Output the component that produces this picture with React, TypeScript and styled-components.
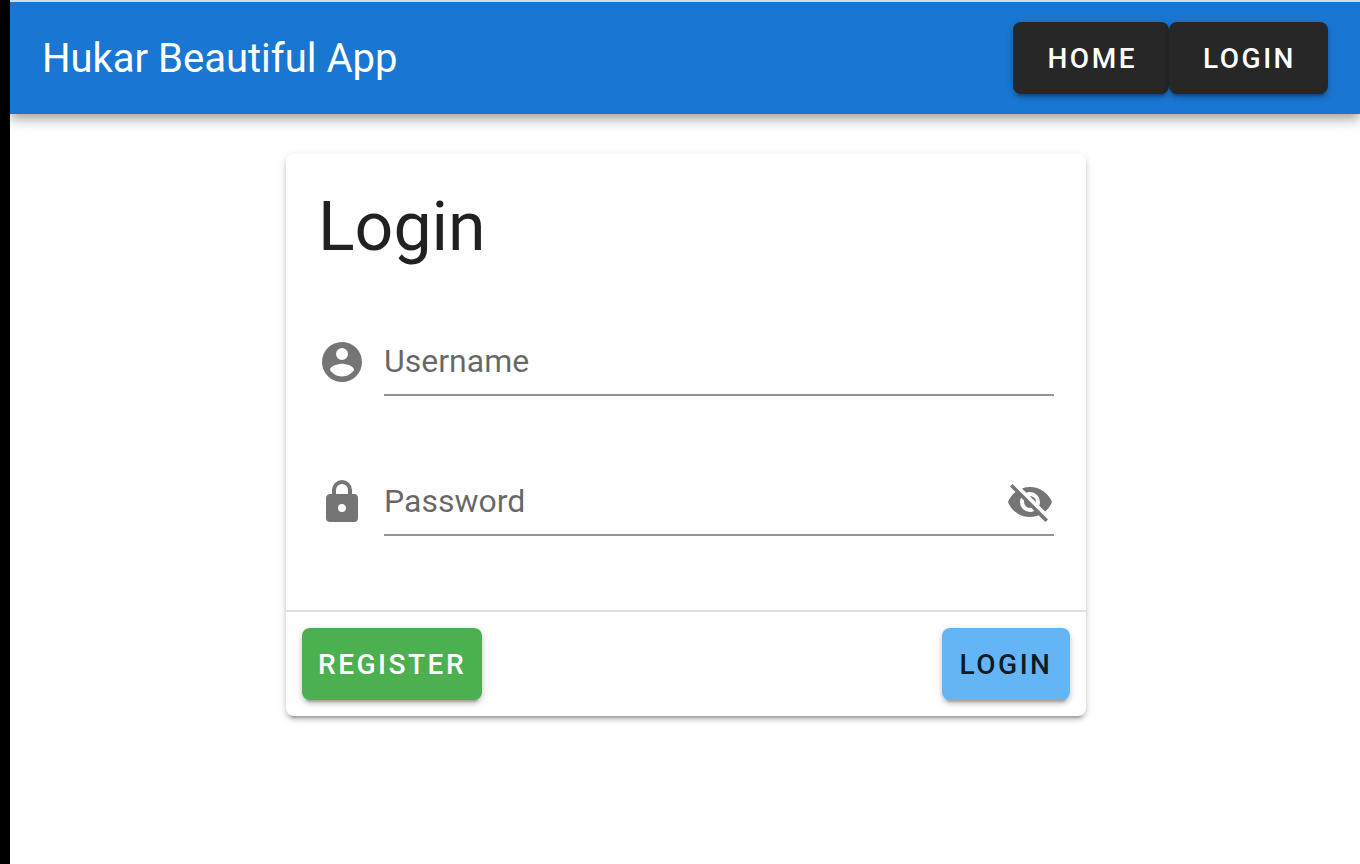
import React, { useState } from "react";
import styled, { createGlobalStyle } from "styled-components";

const GlobalStyle = createGlobalStyle`
  *, *::before, *::after { box-sizing: border-box; }
  body {
    margin: 0;
    background: #fff;
    color: rgba(0, 0, 0, 0.87);
    font-family: Roboto, "Liberation Sans", sans-serif;
  }
`;

const raised = `0 6px 2px -4px rgba(0, 0, 0, 0.2), 0 4px 4px 0 rgba(0, 0, 0, 0.14), 0 2px 10px 0 rgba(0, 0, 0, 0.12)`;

const Shell = styled.div`
  min-height: 100vh;
  border-left: 10px solid #000;
  overflow: hidden;
`;

const AppBar = styled.header`
  display: flex;
  align-items: center;
  justify-content: space-between;
  height: 114px;
  padding: 0 32px;
  border-top: 2px solid #d5d9e0;
  background: #1976d2;
  color: #fff;
  box-shadow: 0 4px 8px -2px rgba(0, 0, 0, 0.2), 0 8px 10px 0 rgba(0, 0, 0, 0.14),
    0 2px 20px 0 rgba(0, 0, 0, 0.12);
`;

const AppTitle = styled.div`
  padding-top: 2px;
  font-size: 40px;
  line-height: 60px;
  white-space: nowrap;
`;

const Nav = styled.nav`
  display: flex;
`;

const tones = {
  dark: { background: "#272727", color: "#fff" },
  success: { background: "#4caf50", color: "#fff" },
  info: { background: "#64b5f6", color: "rgba(0, 0, 0, 0.87)" },
};

const Button = styled.button<{ $tone: keyof typeof tones; $wide?: boolean }>`
  min-width: 128px;
  height: 72px;
  padding: ${(p) => (p.$wide ? "2px 32px 0 34px" : "2px 16px 0")};
  border: 0;
  border-radius: 8px;
  background: ${(p) => tones[p.$tone].background};
  color: ${(p) => tones[p.$tone].color};
  font-family: inherit;
  font-size: 28px;
  font-weight: 500;
  line-height: 32px;
  letter-spacing: 0.09em;
  text-transform: uppercase;
  box-shadow: ${raised};
  cursor: pointer;
`;

const Main = styled.main`
  padding: 40px 14px 40px 16px;
`;

const Card = styled.form`
  max-width: 800px;
  margin: 0 auto;
  border-radius: 8px;
  background: #fff;
  box-shadow: ${raised};
`;

const CardTitle = styled.h1`
  margin: 0;
  padding: 32px 32px 0;
  font-size: 68px;
  font-weight: 400;
  line-height: 82px;
`;

const Fields = styled.div`
  display: flex;
  flex-direction: column;
  gap: 74px;
  padding: 62px 32px 74px;
`;

const Field = styled.div`
  display: flex;
  gap: 18px;
  color: rgba(0, 0, 0, 0.54);
`;

const Icon = styled.svg`
  display: block;
  flex: none;
  width: 48px;
  height: 48px;
  fill: currentColor;
`;

const LeadIcon = styled(Icon)`
  margin-top: 8px;
`;

const Control = styled.div`
  position: relative;
  display: flex;
  flex: 1;
  align-items: center;
  min-width: 0;
  border-bottom: 2px solid rgba(0, 0, 0, 0.42);
`;

const Input = styled.input`
  flex: 1;
  min-width: 0;
  height: 64px;
  padding: 0;
  border: 0;
  outline: 0;
  background: transparent;
  color: rgba(0, 0, 0, 0.87);
  font-family: inherit;
  font-size: 32px;
  line-height: 40px;
`;

const Label = styled.label`
  position: absolute;
  top: 11px;
  left: 0;
  color: rgba(0, 0, 0, 0.6);
  font-size: 32px;
  line-height: 40px;
  pointer-events: none;

  ${Input}:not(:placeholder-shown) + & {
    visibility: hidden;
  }
`;

const IconButton = styled.button`
  padding: 0;
  border: 0;
  background: none;
  color: inherit;
  cursor: pointer;
`;

const Actions = styled.div`
  display: flex;
  justify-content: space-between;
  padding: 16px;
  border-top: 2px solid rgba(0, 0, 0, 0.12);
`;

const paths = {
  account:
    "M12,19.2C9.5,19.2 7.29,17.92 6,16C6.03,14 10,12.9 12,12.9C14,12.9 17.97,14 18,16C16.71,17.92 14.5,19.2 12,19.2M12,5A3,3 0 0,1 15,8A3,3 0 0,1 12,11A3,3 0 0,1 9,8A3,3 0 0,1 12,5M12,2A10,10 0 0,0 2,12A10,10 0 0,0 12,22A10,10 0 0,0 22,12C22,6.47 17.5,2 12,2Z",
  lock:
    "M12,17A2,2 0 0,0 14,15C14,13.89 13.1,13 12,13A2,2 0 0,0 10,15A2,2 0 0,0 12,17M18,8A2,2 0 0,1 20,10V20A2,2 0 0,1 18,22H6A2,2 0 0,1 4,20V10C4,8.89 4.9,8 6,8H7V6A5,5 0 0,1 12,1A5,5 0 0,1 17,6V8H18M12,3A3,3 0 0,0 9,6V8H15V6A3,3 0 0,0 12,3Z",
  eyeOff:
    "M11.83,9L15,12.16C15,12.11 15,12.05 15,12A3,3 0 0,0 12,9C11.94,9 11.89,9 11.83,9M7.53,9.8L9.08,11.35C9.03,11.56 9,11.77 9,12A3,3 0 0,0 12,15C12.22,15 12.44,14.97 12.65,14.92L14.2,16.47C13.53,16.8 12.79,17 12,17A5,5 0 0,1 7,12C7,11.21 7.2,10.47 7.53,9.8M2,4.27L4.28,6.55L4.73,7C3.08,8.3 1.78,10 1,12C2.73,16.39 7,19.5 12,19.5C13.55,19.5 15.03,19.2 16.38,18.66L16.81,19.08L19.73,22L21,20.73L3.27,3M12,7A5,5 0 0,1 17,12C17,12.64 16.87,13.26 16.64,13.82L19.57,16.75C21.07,15.5 22.27,13.86 23,12C21.27,7.61 17,4.5 12,4.5C10.6,4.5 9.26,4.75 8,5.2L10.17,7.35C10.74,7.13 11.35,7 12,7Z",
  eye:
    "M12,9A3,3 0 0,0 9,12A3,3 0 0,0 12,15A3,3 0 0,0 15,12A3,3 0 0,0 12,9M12,17A5,5 0 0,1 7,12A5,5 0 0,1 12,7A5,5 0 0,1 17,12A5,5 0 0,1 12,17M12,4.5C7,4.5 2.73,7.61 1,12C2.73,16.39 7,19.5 12,19.5C17,19.5 21.27,16.39 23,12C21.27,7.61 17,4.5 12,4.5Z",
};

export default function App() {
  const [visible, setVisible] = useState(false);

  return (
    <Shell>
      <GlobalStyle />
      <AppBar>
        <AppTitle>Hukar Beautiful App</AppTitle>
        <Nav>
          <Button type="button" $tone="dark" $wide>Home</Button>
          <Button type="button" $tone="dark" $wide>Login</Button>
        </Nav>
      </AppBar>
      <Main>
        <Card onSubmit={(e) => e.preventDefault()}>
          <CardTitle>Login</CardTitle>
          <Fields>
            <Field>
              <LeadIcon viewBox="0 0 24 24" aria-hidden="true">
                <path d={paths.account} />
              </LeadIcon>
              <Control>
                <Input id="username" type="text" placeholder=" " autoComplete="username" />
                <Label htmlFor="username">Username</Label>
              </Control>
            </Field>
            <Field>
              <LeadIcon viewBox="0 0 24 24" aria-hidden="true">
                <path d={paths.lock} />
              </LeadIcon>
              <Control>
                <Input
                  id="password"
                  type={visible ? "text" : "password"}
                  placeholder=" "
                  autoComplete="current-password"
                />
                <Label htmlFor="password">Password</Label>
                <IconButton
                  type="button"
                  aria-label={visible ? "Hide password" : "Show password"}
                  onClick={() => setVisible(!visible)}
                >
                  <Icon viewBox="0 0 24 24" aria-hidden="true">
                    <path d={visible ? paths.eye : paths.eyeOff} />
                  </Icon>
                </IconButton>
              </Control>
            </Field>
          </Fields>
          <Actions>
            <Button type="button" $tone="success">Register</Button>
            <Button type="submit" $tone="info">Login</Button>
          </Actions>
        </Card>
      </Main>
    </Shell>
  );
}
